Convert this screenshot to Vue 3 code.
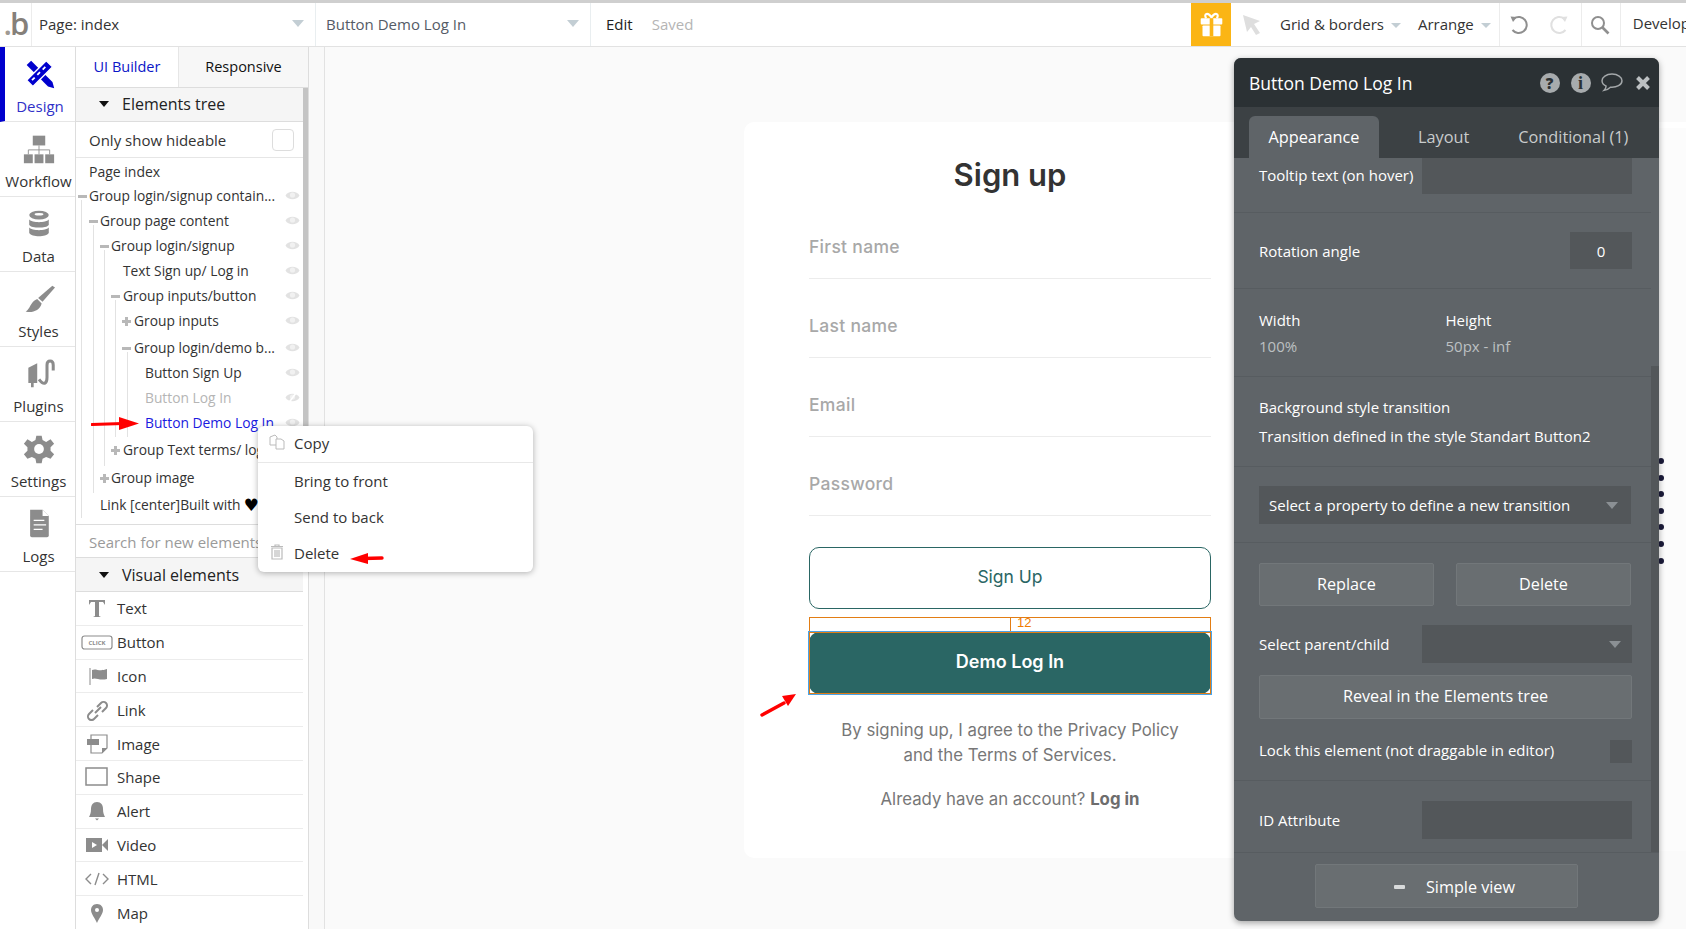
<template>
  <div class="editor">
    <div class="top-strip"></div>
    <header class="topbar">
      <div class="logo"><span class="logo-dot">.</span>b</div>
      <div class="top-select page-select">
        <span>Page: index</span><i class="caret"></i>
      </div>
      <div class="top-select element-select">
        <span>Button Demo Log In</span><i class="caret"></i>
      </div>
      <div class="edit-status">
        <span class="edit">Edit</span><span class="saved">Saved</span>
      </div>
      <div class="top-right">
        <div class="gift">
          <svg width="30" height="28" viewBox="0 0 30 28">
            <path d="M9 7C6 2 11 0 15 6C19 0 24 2 21 7" fill="none" stroke="#fff" stroke-width="2.4" />
            <rect x="3" y="7" width="24" height="7" rx="1" fill="#fff" />
            <rect x="5" y="15" width="20" height="12" rx="1" fill="#fff" />
            <rect x="13" y="7" width="4" height="20" fill="#fbb515" />
          </svg>
        </div>
        <svg class="pointer" width="20" height="22" viewBox="0 0 20 22">
          <path d="M1 1L18 7L12 10L18 19L14 21L9 13L5 18Z" fill="#dedede" />
        </svg>
        <div class="top-menu">Grid &amp; borders<i class="caret small"></i></div>
        <div class="top-menu arrange">Arrange<i class="caret small"></i></div>
        <div class="top-icon undo">
          <svg width="20" height="20" viewBox="0 0 20 20">
            <path d="M5 3.5A8 8 0 1 1 3.5 15" fill="none" stroke="#8f8f8f" stroke-width="2" />
            <path d="M1.5 1.5L8 2L4 7Z" fill="#8f8f8f" />
          </svg>
          <svg width="20" height="20" viewBox="0 0 20 20">
            <path d="M15 3.5A8 8 0 1 0 16.5 15" fill="none" stroke="#e0e0e0" stroke-width="2" />
            <path d="M18.5 1.5L12 2L16 7Z" fill="#e0e0e0" />
          </svg>
        </div>
        <div class="top-icon search">
          <svg width="20" height="20" viewBox="0 0 20 20">
            <circle cx="8" cy="8" r="6" fill="none" stroke="#8f8f8f" stroke-width="2" />
            <path d="M12.5 12.5L18.5 18.5" stroke="#8f8f8f" stroke-width="2.6" />
          </svg>
        </div>
        <div class="develop">Development</div>
      </div>
    </header>

    <div class="workspace">
      <nav class="rail">
        <div v-for="item in railItems" :key="item.label" class="rail-item" :class="{ active: item.active }">
          <svg width="36" height="36" viewBox="0 0 36 36" v-html="item.icon"></svg>
          <span>{{ item.label }}</span>
        </div>
      </nav>

      <aside class="palette">
        <div class="palette-tabs">
          <div class="tab current">UI Builder</div>
          <div class="tab">Responsive</div>
        </div>
        <div class="palette-scroll">
          <div class="section-head first-head"><i class="tri"></i>Elements tree</div>
          <div class="hideable">Only show hideable<span class="check"></span></div>
          <div class="tree">
            <div class="page-row">Page index</div>
            <div
              v-for="row in treeRows"
              :key="row.text"
              class="tree-row"
              :class="[row.cls, 'lvl' + row.level]"
            >
              <span v-if="row.mark === '-'" class="mark minus"></span>
              <span v-if="row.mark === '+'" class="mark plus"></span>
              <span class="tree-text">{{ row.text }}</span>
              <span v-if="row.heart" class="heart">♥</span>
              <svg v-if="row.eye" class="eye" width="15" height="11" viewBox="0 0 15 11">
                <path d="M0.5 5.500C3 0.500 12 0.500 14.500 5.500C12 10.500 3 10.500 0.500 5.500Z" fill="#e2e2e2" />
                <circle cx="7.500" cy="5" r="2.600" fill="#f1f1f1" />
                <path v-if="row.cls === 'muted'" d="M4 10.500L11 1" stroke="#fff" stroke-width="1.600" />
              </svg>
            </div>
            <span class="guide g1"></span>
            <span class="guide g2"></span>
            <span class="guide g3"></span>
            <span class="guide g4"></span>
            <span class="guide g5"></span>
          </div>
          <div class="search-new">Search for new elements...</div>
          <div class="section-head"><i class="tri"></i>Visual elements</div>
          <div v-for="el in visualItems" :key="el.label" class="visual-row">
            <svg width="32" height="22" viewBox="0 0 32 22" v-html="el.icon"></svg>
            <span>{{ el.label }}</span>
          </div>
        </div>
      </aside>

      <div class="gutter"></div>

      <main class="canvas">
        <section class="card">
          <h1>Sign up</h1>
          <div class="field" v-for="f in fields" :key="f">{{ f }}</div>
          <button class="btn-outline">Sign Up</button>
          <div class="gap-guide"><span class="gap-num">12</span></div>
          <div class="btn-wrap"><button class="btn-solid">Demo Log In</button></div>
          <p class="terms">By signing up, I agree to the Privacy Policy<br />and the Terms of Services.</p>
          <p class="already">Already have an account? <b>Log in</b></p>
        </section>
        <section class="image-group">
          <span v-for="n in 7" :key="n" class="dot"></span>
        </section>
      </main>
    </div>

    <!-- menu contextuel -->
    <div class="context-menu">
      <div class="menu-row first">
        <svg width="16" height="16" viewBox="0 0 16 16">
          <path d="M1 3L6 1L8 3V11H1Z" fill="#fff" stroke="#bbb" />
          <path d="M7 5H12L15 7V15H7Z" fill="#fff" stroke="#bbb" />
        </svg>
        <span>Copy</span>
      </div>
      <div class="menu-row"><span>Bring to front</span></div>
      <div class="menu-row"><span>Send to back</span></div>
      <div class="menu-row">
        <svg width="16" height="16" viewBox="0 0 16 16">
          <path d="M3 4H13V15H3ZM2 2.5H14M6 2V1H10V2M6 6V13M8 6V13M10 6V13" fill="none" stroke="#bbb" stroke-width="1.2" />
        </svg>
        <span>Delete</span>
      </div>
    </div>

    <!-- Flèches d'annotation -->
    <svg class="arrow a-tree" width="50" height="16" viewBox="0 0 50 16">
      <path d="M1 8.5L32 7.500" stroke="#f00" stroke-width="3" stroke-linecap="round" />
      <path d="M28 1L48 7.5L28 14Z" fill="#f00" />
    </svg>
    <svg class="arrow a-delete" width="36" height="14" viewBox="0 0 36 14">
      <path d="M14 6.5L33 6" stroke="#f00" stroke-width="3.4" stroke-linecap="round" />
      <path d="M1 7L19 1V12Z" fill="#f00" />
    </svg>
    <svg class="arrow a-demo" width="38" height="24" viewBox="0 0 38 24">
      <path d="M2 22L24 10" stroke="#f00" stroke-width="3.4" stroke-linecap="round" />
      <path d="M36 1L22 3L28 13Z" fill="#f00" />
    </svg>

    <!-- Éditeur de propriétés -->
    <div class="props">
      <div class="props-head">
        <span>Button Demo Log In</span>
        <div class="props-icons">
          <span class="cell"><span class="round">?</span></span>
          <span class="cell"><span class="round serif">i</span></span>
          <span class="cell">
            <svg width="24" height="21" viewBox="0 0 22 20">
              <path d="M11 2C5.5 2 1.500 4.800 1.500 8.300C1.500 10.500 3 12.300 5.400 13.400C5.300 15 4.600 16.500 3.500 17.500C6 17.200 8 16 9.500 14.500C15.500 15 20.500 12.200 20.500 8.300C20.500 4.800 16.500 2 11 2Z" fill="none" stroke="#a3a7a9" stroke-width="1.4" />
            </svg>
          </span>
          <span class="cell">
            <svg width="16" height="16" viewBox="0 0 16 16">
              <path d="M2.500 2.500L13.500 13.500M13.500 2.500L2.500 13.500" stroke="#bcc0c2" stroke-width="4" />
            </svg>
          </span>
        </div>
      </div>
      <div class="props-tabs">
        <div class="ptab on">Appearance</div>
        <div class="ptab layout">Layout</div>
        <div class="ptab cond">Conditional (1)</div>
      </div>
      <div class="props-body">
        <div class="row tooltip">
          <label>Tooltip text (on hover)</label><div class="input wide short"></div>
        </div>
        <div class="row rotation">
          <label>Rotation angle</label><div class="input num">0</div>
        </div>
        <div class="row size">
          <div class="size-col"><label>Width</label><span>100%</span></div>
          <div class="size-col"><label>Height</label><span>50px - inf</span></div>
        </div>
        <div class="row transition">
          <label>Background style transition</label>
          <label>Transition defined in the style Standart Button2</label>
        </div>
        <div class="row pick">
          <div class="input pick-input">Select a property to define a new transition<i class="caret dark"></i></div>
        </div>
        <div class="row actions">
          <div class="btn-row">
            <div class="pbtn">Replace</div>
            <div class="pbtn">Delete</div>
          </div>
          <div class="parent-row">
            <label>Select parent/child</label>
            <div class="input wide"><i class="caret dark"></i></div>
          </div>
          <div class="pbtn reveal">Reveal in the Elements tree</div>
          <div class="lock-row">
            <label>Lock this element (not draggable in editor)</label><span class="lock"></span>
          </div>
        </div>
        <div class="row id-row">
          <label>ID Attribute</label><div class="input wide"></div>
        </div>
        <div class="scrollbar"></div>
      </div>
      <div class="props-foot">
        <div class="pbtn simple"><i class="dash"></i>Simple view</div>
      </div>
    </div>
  </div>
</template>

<script setup>
const g = "#8c8c8c";

const railItems = [
  {
    label: "Design",
    active: true,
    icon: `<path d="M3 8L8 3L32 27L34 34L27 32Z" fill="#0000cd"/><path d="M3 25L25 3L32 10L10 32Z" fill="#0000cd" stroke="#fff" stroke-width="1.500"/><path d="M9 25L12 22M15 19L18 16M21 13L24 10" stroke="#fff" stroke-width="2"/>`,
  },
  {
    label: "Workflow",
    icon: `<rect x="11" y="3" width="14" height="11" fill="${g}"/><path d="M18 14V24M6 24V19H30V24" stroke="${g}" fill="none"/><rect x="1" y="24" width="10" height="10" fill="${g}"/><rect x="13" y="24" width="10" height="10" fill="${g}"/><rect x="25" y="24" width="10" height="10" fill="${g}"/>`,
  },
  {
    label: "Data",
    icon: `<ellipse cx="18" cy="8" rx="11" ry="5" fill="${g}"/><ellipse cx="18" cy="7" rx="5" ry="1.500" fill="#fff"/><path d="M7 13C10 17 26 17 29 13V19C26 23 10 23 7 19Z" fill="${g}"/><path d="M7 22C10 26 26 26 29 22V28C26 33 10 33 7 28Z" fill="${g}"/>`,
  },
  {
    label: "Styles",
    icon: `<path d="M33 3L36 5L22 21L17 17Z" fill="${g}"/><path d="M16 18L21 23C19 31 10 34 3 32C8 30 8 21 16 18Z" fill="${g}"/>`,
  },
  {
    label: "Plugins",
    icon: `<path d="M6 11L16 6V28H12V33H9V28H6Z" fill="${g}"/><path d="M18 24C24 32 27 28 27 22V8C27 2 34 2 34 8V14" fill="none" stroke="${g}" stroke-width="3.400"/>`,
  },
  {
    label: "Settings",
    icon: `<path d="M15 3H21L22 8L26 10L31 7L35 12L31 16V20L35 24L31 29L26 27L22 29L21 34H15L14 29L10 27L5 29L1 24L5 20V16L1 12L5 7L10 10L14 8Z" fill="${g}"/><circle cx="18" cy="18" r="5.500" fill="#fff"/>`,
  },
  {
    label: "Logs",
    icon: `<path d="M8 2H22L29 9V31Q29 33 27 33H10Q8 33 8 31Z" fill="${g}"/><path d="M12 14H24M12 19H26M12 24H22" stroke="#fff" stroke-width="1.500"/><path d="M22 2V9H29" fill="#fff"/>`,
  },
];

const treeRows = [
  { text: "Group login/signup contain...", level: 0, mark: "-", eye: true },
  { text: "Group page content", level: 1, mark: "-", eye: true },
  { text: "Group login/signup", level: 2, mark: "-", eye: true },
  { text: "Text Sign up/ Log in", level: 3, eye: true },
  { text: "Group inputs/button", level: 3, mark: "-", eye: true },
  { text: "Group inputs", level: 4, mark: "+", eye: true },
  { text: "Group login/demo b...", level: 4, mark: "-", eye: true, cls: "tall" },
  { text: "Button Sign Up", level: 5, eye: true },
  { text: "Button Log In", level: 5, eye: true, cls: "muted" },
  { text: "Button Demo Log In", level: 5, eye: true, cls: "selected" },
  { text: "Group Text terms/ log in", level: 3, mark: "+", cls: "tall" },
  { text: "Group image", level: 2, mark: "+", cls: "tall2" },
  { text: "Link [center]Built with", level: 1, cls: "tall", heart: true },
];

const fields = ["First name", "Last name", "Email", "Password"];

const visualItems = [
  {
    label: "Text",
    icon: `<path d="M8 3H24V8L22 5H18V19L20 20H12L14 19V5H10L8 8Z" fill="${g}"/>`,
  },
  {
    label: "Button",
    icon: `<rect x="1" y="5" width="30" height="13" rx="2.500" fill="#fff" stroke="${g}" stroke-width="1.200"/><text x="16" y="14" font-size="6" text-anchor="middle" font-weight="700" font-family="Open Sans" fill="${g}">CLICK</text>`,
  },
  {
    label: "Icon",
    icon: `<path d="M9 3V20" stroke="${g}"/><path d="M11 5C15 3 18 7 26 4V14C18 16 15 12 11 14Z" fill="${g}"/>`,
  },
  {
    label: "Link",
    icon: `<path d="M14 14L20 8M12 11L8 15A3.500 3.500 0 0 0 13 20L17 16M16 8L20 4A3.500 3.500 0 0 1 25 9L21 13" fill="none" stroke="${g}" stroke-width="2"/>`,
  },
  {
    label: "Image",
    icon: `<path d="M10 2H26V15L21 20H10Z" fill="#fff" stroke="${g}" stroke-width="1.200"/><rect x="6" y="6" width="12" height="6" fill="${g}"/><path d="M21 20V15H26Z" fill="${g}"/>`,
  },
  {
    label: "Shape",
    icon: `<rect x="5" y="2" width="21" height="17" fill="#fff" stroke="${g}" stroke-width="1.500"/>`,
  },
  {
    label: "Alert",
    icon: `<path d="M16 2C20 2 22 5 22 9C22 13 23 15 24 17H8C9 15 10 13 10 9C10 5 12 2 16 2Z" fill="${g}"/><path d="M14 18.500H18L16 20.500Z" fill="${g}"/>`,
  },
  {
    label: "Video",
    icon: `<rect x="5" y="4" width="16" height="14" fill="${g}"/><path d="M21 11L27 5V17Z" fill="${g}"/><path d="M11 8V14L16 11Z" fill="#fff"/>`,
  },
  {
    label: "HTML",
    icon: `<path d="M10 6L5 11L10 16M22 6L27 11L22 16M18 5L14 17" fill="none" stroke="${g}" stroke-width="1.400"/>`,
  },
  {
    label: "Map",
    icon: `<path d="M16 2C20 2 22 5 22 8C22 12 18 16 16 21C14 16 10 12 10 8C10 5 12 2 16 2Z" fill="${g}"/><circle cx="16" cy="8" r="2" fill="#fff"/>`,
  },
];
</script>

<style>
html,
body {
  margin: 0;
  overflow: hidden;
  background: #fff;
}
</style>

<style scoped>
* {
  box-sizing: border-box;
}

.editor {
  position: relative;
  width: 1686px;
  height: 929px;
  overflow: hidden;
  font-family: "Open Sans", "Liberation Sans", sans-serif;
  font-size: 15px;
  color: #222;
  display: flex;
  flex-direction: column;
}

.top-strip {
  height: 3px;
  background: #cfcfcf;
  flex: none;
}

.topbar {
  height: 44px;
  flex: none;
  display: flex;
  align-items: center;
  background: #fff;
  border-bottom: 1px solid #e2e2e2;
}

.logo {
  width: 32px;
  height: 43px;
  border-right: 1px solid #ececec;
  font-size: 31px;
  font-weight: 600;
  line-height: 40px;
  color: #85807a;
  text-align: center;
  letter-spacing: -2px;
  flex: none;
}

.logo-dot {
  color: #a09a93;
}

.top-select {
  height: 43px;
  display: flex;
  align-items: center;
  justify-content: space-between;
  border-right: 1px solid #e9eef0;
  padding-right: 11px;
  padding-bottom: 2px;
  flex: none;
}

.page-select {
  width: 284px;
  padding-left: 7px;
  color: #333;
}

.element-select {
  width: 275px;
  padding-left: 10px;
  color: #555b66;
}

.caret {
  display: inline-block;
  width: 0;
  height: 0;
  border-left: 6px solid transparent;
  border-right: 6px solid transparent;
  border-top: 7px solid #c3ced4;
}

.caret.small {
  border-left-width: 5px;
  border-right-width: 5px;
  border-top-width: 5px;
  margin-left: 7px;
  vertical-align: 2px;
}

.caret.dark {
  border-top-color: #8b9094;
  margin-left: auto;
}

.edit-status {
  display: flex;
  padding: 0 0 2px 15px;
  gap: 19px;
}

.saved {
  color: #b5b5b5;
}

.top-right {
  margin-left: auto;
  display: flex;
  align-items: center;
  height: 43px;
  width: 495px;
  flex: none;
}

.gift {
  width: 40px;
  height: 43px;
  padding: 8px 0 0 7px;
  background: #fbb515;
  flex: none;
}

.gift svg {
  display: block;
  width: 27px;
  height: 27px;
}

.pointer {
  flex: none;
  margin: 0 18px 0 11px;
}

.top-menu {
  white-space: nowrap;
  color: #333;
  margin-right: 17px;
  padding-bottom: 2px;
  flex: none;
}

.top-menu.arrange {
  margin-right: 8px;
}

.top-icon {
  height: 43px;
  display: flex;
  align-items: center;
  border-left: 1px solid #ececec;
  flex: none;
}

.undo {
  gap: 20px;
  padding: 0 12px 0 9px;
}

.search {
  padding: 0 10px 0 8px;
}

.develop {
  height: 43px;
  line-height: 41px;
  border-left: 1px solid #ececec;
  padding-left: 12px;
  color: #333;
  white-space: nowrap;
  flex: none;
}

.workspace {
  flex: 1;
  display: flex;
  min-height: 0;
}

.rail {
  width: 76px;
  flex: none;
  border-right: 1px solid #ddd;
}

.rail-item {
  height: 75px;
  display: flex;
  flex-direction: column;
  align-items: center;
  padding: 11px 0 0 2px;
  border-bottom: 1px solid #e6e6e6;
  color: #333;
  line-height: 20px;
}

.rail-item svg {
  flex: none;
  margin-bottom: 6px;
  width: 32px;
  height: 32px;
}

.rail-item.active {
  border-left: 5px solid #0000cd;
  padding-left: 0;
  color: #3030c8;
}

.palette {
  width: 233px;
  flex: none;
  display: flex;
  flex-direction: column;
  border-right: 1px solid #ddd;
  background: #fff;
}

.palette-tabs {
  display: flex;
  height: 41px;
  flex: none;
  border-bottom: 1px solid #ddd;
  font-size: 14.500px;
}

.tab {
  flex: 0 0 103px;
  text-align: center;
  line-height: 40px;
  color: #0b15c8;
  border-right: 1px solid #e6e6e6;
}

.tab + .tab {
  flex: 1;
  color: #111;
  background: #f7f7f7;
  border-right: 0;
}

.palette-scroll {
  flex: 1;
  position: relative;
  width: 227px;
  min-height: 0;
}

.palette-scroll::after {
  content: "";
  position: absolute;
  left: 227px;
  top: 0;
  width: 5px;
  height: 364px;
  background: #c4c4c4;
}

.section-head {
  height: 34px;
  background: #f5f5f5;
  border-bottom: 1px solid #ddd;
  display: flex;
  align-items: center;
  padding-left: 23px;
  font-size: 16px;
}

.first-head {
  padding-bottom: 2px;
}

.tri {
  width: 0;
  height: 0;
  border-left: 5px solid transparent;
  border-right: 5px solid transparent;
  border-top: 6px solid #111;
  margin-right: 13px;
}

.hideable {
  height: 36px;
  display: flex;
  align-items: center;
  justify-content: space-between;
  padding: 0 9px 0 13px;
  border-bottom: 1px solid #e6e6e6;
  color: #333;
}

.check {
  width: 22px;
  height: 22px;
  border: 1px solid #ddd;
  border-radius: 4px;
}

.tree {
  position: relative;
  height: 367px;
  border-bottom: 1px solid #ddd;
  font-size: 13.800px;
}

.page-row {
  height: 24px;
  line-height: 24px;
  padding-left: 13px;
  padding-top: 2px;
  color: #333;
  margin-bottom: 1px;
  font-size: 14px;
}

.tree-row {
  height: 25px;
  display: flex;
  align-items: center;
  position: relative;
  white-space: nowrap;
  color: #333;
  overflow: hidden;
}

.tree-row.tall {
  margin-top: 2px;
}

.tree-row.tall2 {
  margin-top: 3px;
}

.tree-row.muted .tree-text {
  color: #b5b5b5;
}

.tree-row.selected .tree-text {
  color: #1a1ae0;
}

.heart {
  margin-left: 3px;
  font-family: "DejaVu Sans", sans-serif;
  font-size: 17px;
  line-height: 20px;
  color: #000;
}

.lvl0 .tree-text {
  margin-left: 13px;
}

.lvl1 .tree-text {
  margin-left: 24px;
}

.lvl2 .tree-text {
  margin-left: 35px;
}

.lvl3 .tree-text {
  margin-left: 47px;
}

.lvl4 .tree-text {
  margin-left: 58px;
}

.lvl5 .tree-text {
  margin-left: 69px;
}

.mark {
  position: absolute;
  top: 50%;
  width: 9px;
  height: 3px;
  margin-top: -1px;
  background: #b8b8b8;
}

.mark.plus::after {
  content: "";
  position: absolute;
  left: 3px;
  top: -3px;
  width: 3px;
  height: 9px;
  background: #b8b8b8;
}

.lvl0 .mark {
  left: 2px;
}

.lvl1 .mark {
  left: 13px;
}

.lvl2 .mark {
  left: 24px;
}

.lvl3 .mark {
  left: 35px;
}

.lvl4 .mark {
  left: 46px;
}

.eye {
  position: absolute;
  right: 3px;
  top: 7px;
}

.guide {
  position: absolute;
  width: 1px;
  background: #e2e2e2;
}

.g1 {
  left: 5px;
  top: 42px;
  height: 318px;
}

.g2 {
  left: 17px;
  top: 67px;
  height: 268px;
}

.g3 {
  left: 28px;
  top: 92px;
  height: 216px;
}

.g4 {
  left: 39px;
  top: 142px;
  height: 137px;
}

.g5 {
  left: 51px;
  top: 194px;
  height: 85px;
}

.search-new {
  height: 33px;
  line-height: 34px;
  padding-left: 13px;
  color: #9a9a9a;
  border-bottom: 1px solid #ddd;
  white-space: nowrap;
  overflow: hidden;
}

.visual-row {
  height: 33.800px;
  display: flex;
  align-items: center;
  gap: 4px;
  padding-left: 5px;
  border-bottom: 1px solid #ececec;
  color: #333;
}

.gutter {
  width: 16px;
  flex: none;
  background: #f9f9f9;
  border-right: 1px solid #e2e2e2;
}

.canvas {
  flex: 1;
  min-width: 0;
  background: #fafafa;
  display: flex;
  align-items: flex-start;
  padding: 75px 0 0 419px;
}

.card {
  width: 532px;
  height: 736px;
  flex: none;
  background: #fff;
  border-radius: 10px 0 0 10px;
  padding: 32px 65px 0;
  font-family: Inter, "Open Sans", sans-serif;
  display: flex;
  flex-direction: column;
  align-items: stretch;
}

h1 {
  margin: 0 0 39px;
  height: 42px;
  text-align: center;
  font-size: 31px;
  line-height: 42px;
  font-weight: 600;
  color: #333;
}

.field {
  height: 44px;
  border-bottom: 1px solid #ececec;
  color: #a8a8a8;
  font-size: 17.500px;
  font-weight: 500;
  letter-spacing: 0.3px;
  line-height: 24px;
}

.field + .field {
  margin-top: 35px;
}

.btn-outline {
  margin-top: 31px;
  height: 62px;
  flex: none;
  padding-bottom: 4px;
  border: 1px solid #2a6664;
  border-radius: 10px;
  background: #fff;
  color: #2a6664;
  font-family: inherit;
  font-size: 17.500px;
}

.gap-guide {
  position: relative;
  margin-top: 8px;
  height: 14px;
  flex: none;
  border: 1px solid #e27d14;
  border-bottom: 0;
}

.gap-guide::before {
  content: "";
  position: absolute;
  left: 50%;
  top: 0;
  bottom: 0;
  width: 1px;
  background: #e27d14;
}

.gap-num {
  position: absolute;
  left: 50%;
  margin-left: 7px;
  top: -2px;
  font-size: 13px;
  line-height: 14px;
  color: #f07c00;
  font-family: "Liberation Sans", sans-serif;
}

.btn-wrap {
  height: 64px;
  flex: none;
  border: 1px solid #4aa3e8;
  margin: 0 -1px;
  outline: 1px solid #e27d14;
  outline-offset: -2px;
}

.btn-solid {
  display: block;
  width: 100%;
  height: 100%;
  padding-bottom: 4px;
  border: 0;
  border-radius: 10px;
  background: #2a6664;
  color: #fff;
  font-family: inherit;
  font-size: 18px;
  font-weight: 600;
}

.terms {
  margin: 23px 0 0;
  text-align: center;
  color: #777;
  font-size: 16.800px;
  line-height: 25px;
}

.already {
  margin: 19px 0 0;
  text-align: center;
  color: #777;
  font-size: 16.800px;
  line-height: 25px;
}

.already b {
  color: #6d6d6d;
}

.image-group {
  flex: 1;
  height: 729px;
  background: #fcfcfc;
  border-top: 6px solid #fff;
  display: flex;
  flex-direction: column;
  align-items: flex-end;
  padding-top: 330px;
  gap: 10.600px;
}

.dot {
  width: 6px;
  height: 6px;
  border-radius: 50%;
  background: #1c1c3a;
  margin-right: 22px;
}

.context-menu {
  position: absolute;
  left: 258px;
  top: 426px;
  width: 275px;
  height: 146px;
  background: #fff;
  border-radius: 6px;
  box-shadow: 0 1px 6px rgba(0, 0, 0, 0.3);
  color: #333;
}

.menu-row {
  position: relative;
  height: 36px;
  line-height: 34px;
  padding-left: 36px;
}

.menu-row.first {
  height: 37px;
  border-bottom: 1px solid #e8e8e8;
  margin-bottom: 1px;
}

.menu-row svg {
  position: absolute;
  left: 11px;
  top: 8px;
}

.arrow {
  position: absolute;
}

.a-tree {
  left: 91px;
  top: 416px;
}

.a-delete {
  left: 349px;
  top: 552px;
}

.a-demo {
  left: 760px;
  top: 693px;
}

.props {
  position: absolute;
  left: 1234px;
  top: 58px;
  width: 425px;
  height: 863px;
  border-radius: 7px;
  overflow: hidden;
  background: #5f6468;
  box-shadow: 0 2px 6px rgba(0, 0, 0, 0.35);
  display: flex;
  flex-direction: column;
  color: #fff;
}

.props-head {
  height: 49px;
  flex: none;
  background: #2b3134;
  display: flex;
  align-items: center;
  justify-content: space-between;
  padding: 0 1px 0 15px;
  font-size: 17.500px;
}

.props-icons {
  display: flex;
  align-items: center;
}

.cell {
  width: 31px;
  display: flex;
  justify-content: center;
  align-items: center;
}

.round {
  width: 20px;
  height: 20px;
  border-radius: 50%;
  background: #a7abad;
  color: #2b3134;
  font-weight: 800;
  font-size: 15px;
  line-height: 20px;
  text-align: center;
}

.round.serif {
  font-family: "Liberation Serif", serif;
  font-size: 18px;
}

.props-tabs {
  height: 51px;
  flex: none;
  background: #3c4144;
  display: flex;
  align-items: flex-end;
  padding-left: 15px;
  font-size: 16.300px;
}

.ptab {
  height: 42px;
  line-height: 42px;
  color: #c9cccd;
}

.ptab.on {
  width: 130px;
  background: #5f6468;
  color: #fff;
  text-align: center;
  border-radius: 6px 6px 0 0;
}

.ptab.layout {
  margin-left: 39px;
}

.ptab.cond {
  margin-left: 49px;
}

.props-body {
  flex: 1;
  position: relative;
  min-height: 0;
}

.row {
  margin-right: 8px;
  padding: 0 19px 0 25px;
  border-bottom: 1px solid #575c60;
}

.row label {
  display: block;
  white-space: nowrap;
}

.input {
  background: #53575a;
  flex: none;
}

.input.wide {
  width: 210px;
  height: 38px;
  display: flex;
  align-items: center;
  padding-right: 11px;
}

.tooltip {
  height: 55px;
  display: flex;
  justify-content: space-between;
}

.input.short {
  height: 36px;
}

.tooltip label {
  line-height: 34px;
}

.rotation {
  height: 76px;
  display: flex;
  align-items: center;
  justify-content: space-between;
}

.input.num {
  width: 62px;
  height: 37px;
  line-height: 38px;
  text-align: center;
}

.size {
  height: 88px;
  display: flex;
  padding-top: 18px;
  line-height: 26px;
}

.size-col {
  width: 188px;
}

.size-col span {
  color: #bcc0c2;
}

.transition {
  height: 90px;
  padding-top: 16px;
  line-height: 29px;
}

.pick {
  height: 76px;
  padding-top: 19px;
}

.pick-input {
  height: 38px;
  display: flex;
  align-items: center;
  padding: 0 13px 0 10px;
  white-space: nowrap;
  margin-right: 1px;
}

.actions {
  height: 238px;
  padding-top: 20px;
}

.btn-row {
  display: flex;
  gap: 22px;
  padding-right: 1px;
}

.pbtn {
  background: #696e71;
  border: 1px solid #72777a;
  border-radius: 2px;
  text-align: center;
  font-size: 16.200px;
}

.btn-row .pbtn {
  flex: 1;
  height: 43px;
  line-height: 41px;
}

.parent-row {
  margin-top: 19px;
  height: 38px;
  display: flex;
  align-items: center;
  justify-content: space-between;
}

.reveal {
  margin-top: 12px;
  height: 44px;
  line-height: 40px;
}

.lock-row {
  margin-top: 21px;
  display: flex;
  align-items: center;
  justify-content: space-between;
}

.lock-row label {
  margin-top: -3px;
}

.lock {
  width: 22px;
  height: 23px;
  background: #53575a;
}

.id-row {
  height: 71px;
  display: flex;
  align-items: flex-start;
  justify-content: space-between;
  padding-top: 20px;
  border-bottom: 0;
}

.id-row label {
  line-height: 38px;
}

.scrollbar {
  position: absolute;
  right: 0;
  top: 208px;
  bottom: 0;
  width: 8px;
  background: #53575a;
}

.props-foot {
  height: 69px;
  flex: none;
  border-top: 1px solid #575c60;
  padding-top: 11px;
  display: flex;
  justify-content: center;
}

.pbtn.simple {
  width: 263px;
  height: 44px;
  padding: 1px 0 0 16px;
  display: flex;
  justify-content: center;
  align-items: center;
  gap: 21px;
}

.dash {
  width: 11px;
  height: 4px;
  background: #d8dadb;
  border-radius: 1px;
}
</style>
